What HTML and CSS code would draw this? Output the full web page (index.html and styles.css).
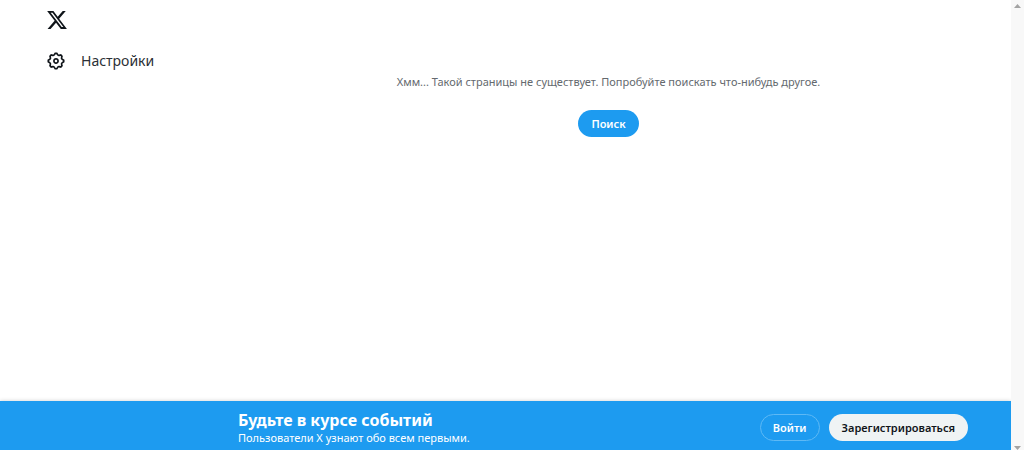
FILE: index.html
```html
<!DOCTYPE html>
<html lang="ru">
<head>
    <meta charset="UTF-8">
    <meta name="viewport" content="width=device-width, initial-scale=1.0">
    <title>X</title>
    <link rel="stylesheet" href="styles.css">
</head>
<body>
    <div class="page">
        <div class="content">
            <header class="sidebar">
                <a href="#" class="logo" aria-label="X">
                    <svg viewBox="0 0 24 24" width="22" height="22"><path d="M18.244 2.25h3.308l-7.227 8.26 8.502 11.24H16.17l-5.214-6.817L4.99 21.75H1.68l7.73-8.835L1.254 2.25H8.08l4.713 6.231zm-1.161 17.52h1.833L7.084 4.126H5.117z"/></svg>
                </a>
                <nav>
                    <a href="#" class="nav-link">
                        <svg viewBox="0 0 24 24" width="20" height="20"><path d="M10.54 1.75h2.92l1.57 2.36c.11.17.32.25.53.21l2.53-.59 2.17 2.17-.58 2.54c-.05.2.04.41.21.53l2.36 1.57v2.92l-2.36 1.57c-.17.12-.26.33-.21.53l.58 2.54-2.17 2.17-2.53-.59c-.21-.04-.42.04-.53.21l-1.57 2.36h-2.92l-1.58-2.36c-.11-.17-.32-.25-.52-.21l-2.54.59-2.17-2.17.58-2.54c.05-.2-.03-.41-.21-.53l-2.35-1.57v-2.92L4.1 8.97c.18-.12.26-.33.21-.53L3.73 5.9 5.9 3.73l2.54.59c.2.04.41-.04.52-.21l1.58-2.36zm1.07 2l-.98 1.47C10.05 6.08 9 6.5 7.99 6.27l-1.46-.34-.6.6.33 1.46c.24 1.01-.18 2.07-1.05 2.64l-1.46.98v.78l1.46.98c.87.57 1.29 1.63 1.05 2.64l-.33 1.46.6.6 1.46-.34c1.01-.23 2.06.19 2.64 1.05l.98 1.47h.78l.97-1.47c.58-.86 1.63-1.28 2.65-1.05l1.45.34.61-.6-.34-1.46c-.23-1.01.18-2.07 1.05-2.64l1.47-.98v-.78l-1.47-.98c-.87-.57-1.28-1.63-1.05-2.64l.34-1.46-.61-.6-1.45.34c-1.02.23-2.07-.19-2.65-1.05l-.97-1.47h-.78zM12 10.5c-.83 0-1.5.67-1.5 1.5s.67 1.5 1.5 1.5c.82 0 1.5-.67 1.5-1.5s-.68-1.5-1.5-1.5zM8.5 12c0-1.93 1.56-3.5 3.5-3.5 1.93 0 3.5 1.57 3.5 3.5s-1.57 3.5-3.5 3.5c-1.94 0-3.5-1.57-3.5-3.5z"/></svg>
                        <span>Настройки</span>
                    </a>
                </nav>
            </header>
            <main class="main">
                <p class="message">Хмм... Такой страницы не существует. Попробуйте поискать что-нибудь другое.</p>
                <a href="#" class="button search-button">Поиск</a>
            </main>
        </div>
        <footer class="bar">
            <div class="bar-text">
                <h2>Будьте в курсе событий</h2>
                <p>Пользователи X узнают обо всем первыми.</p>
            </div>
            <div class="bar-buttons">
                <a href="#" class="button login-button">Войти</a>
                <a href="#" class="button signup-button">Зарегистрироваться</a>
            </div>
        </footer>
    </div>
    <div class="scrollbar">
        <svg viewBox="0 0 7 4" width="7" height="4"><path d="M0 4L3.5 0L7 4z"/></svg>
        <svg viewBox="0 0 7 4" width="7" height="4"><path d="M0 0L3.5 4L7 0z"/></svg>
    </div>
</body>
</html>
```

FILE: styles.css
```css
* {
    box-sizing: border-box;
}

body {
    display: flex;
    margin: 0;
    min-height: 100vh;
    background-color: #fff;
    color: #0f1419;
    font-family: "Segoe UI", "Noto Sans", sans-serif;
    font-size: 11px;
}

a {
    color: inherit;
    text-decoration: none;
}

h2,
p {
    margin: 0;
}

svg {
    display: block;
    fill: #0f1419;
}

.page {
    display: flex;
    flex: 1;
    flex-direction: column;
}

.content {
    display: flex;
    flex: 1;
}

.sidebar {
    width: 206px;
    padding: 9px 0 0 46px;
}

.logo {
    display: block;
    width: 22px;
}

.nav-link {
    display: flex;
    align-items: center;
    gap: 15px;
    margin-top: 20px;
    color: #2b3036;
    font-size: 14px;
    line-height: 20px;
}

.main {
    display: flex;
    flex: 1;
    flex-direction: column;
    align-items: center;
    gap: 20px;
    padding-top: 74px;
}

.message {
    color: #64696e;
    line-height: 16px;
}

.button {
    display: flex;
    align-items: center;
    height: 27px;
    padding: 0 12px;
    border: 1px solid transparent;
    border-radius: 14px;
    font-weight: 600;
}

.search-button {
    background-color: #1d9bf0;
    color: #fff;
}

.bar {
    display: flex;
    align-items: center;
    justify-content: space-between;
    padding: 9px 43px 5px 238px;
    background-color: #1d9bf0;
    box-shadow: 0 0 4px rgba(0, 0, 0, 0.2);
    color: #fff;
}

.bar-text h2 {
    font-size: 16px;
    font-weight: bold;
    line-height: 20px;
}

.bar-text p {
    line-height: 15px;
}

.bar-buttons {
    display: flex;
    gap: 9px;
}

.login-button {
    border-color: #5eb9f5;
}

.signup-button {
    background-color: #eff3f4;
    color: #0f1419;
}

.scrollbar {
    display: flex;
    flex-direction: column;
    align-items: center;
    justify-content: space-between;
    width: 13px;
    padding: 4px 0 0;
    background-color: #f8f8f8;
}

.scrollbar svg {
    fill: #a3a3a3;
}
```
